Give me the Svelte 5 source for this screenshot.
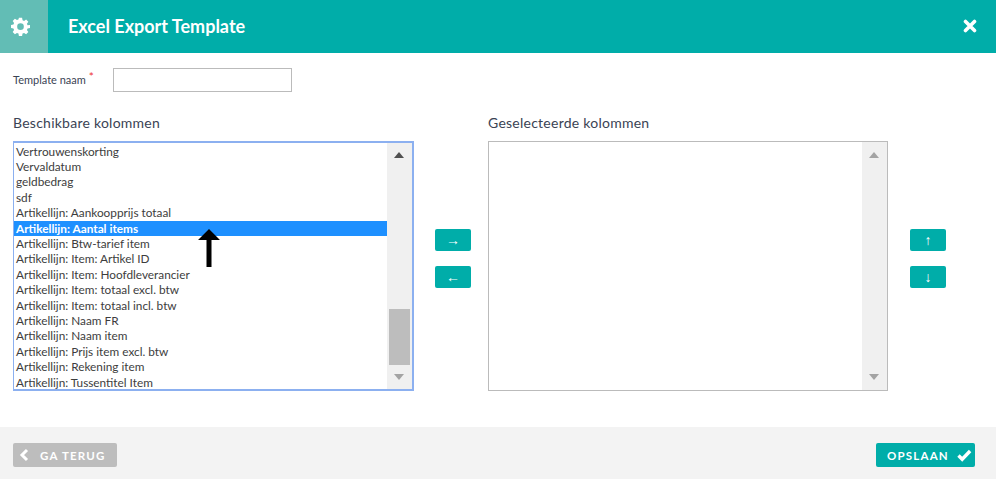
<script>
  const items = ['Vertrouwenskorting','Vervaldatum','geldbedrag','sdf','Artikellijn: Aankoopprijs totaal','Artikellijn: Aantal items','Artikellijn: Btw-tarief item','Artikellijn: Item: Artikel ID','Artikellijn: Item: Hoofdleverancier','Artikellijn: Item: totaal excl. btw','Artikellijn: Item: totaal incl. btw','Artikellijn: Naam FR','Artikellijn: Naam item','Artikellijn: Prijs item excl. btw','Artikellijn: Rekening item','Artikellijn: Tussentitel Item'];
</script>

<div class="page">
  <header class="head">
    <div class="gear">
      <svg width="20" height="20" viewBox="0 0 24 24"><path fill="#fff" fill-rule="evenodd" d="M10 1h4l.6 3.1 1.9.8 2.6-1.8 2.8 2.8-1.8 2.6.8 1.9L24 10v4l-3.1.6-.8 1.9 1.8 2.6-2.8 2.8-2.6-1.8-1.9.8L14 24h-4l-.6-3.1-1.9-.8-2.6 1.8-2.8-2.8 1.8-2.6-.8-1.9L0 14v-4l3.1-.6.8-1.9-1.8-2.6 2.8-2.8 2.6 1.8 1.9-.8zM12 8a4.2 4.2 0 1 0 0 8.400a4.200 4.200 0 0 0 0-8.400z"/></svg>
    </div>
    <h1>Excel Export Template</h1>
    <svg class="close" width="14" height="14" viewBox="0 0 14 14"><path d="M2.500 2.500l9 9m0-9l-9 9" stroke="#fff" stroke-width="3.600" stroke-linecap="round"/></svg>
  </header>

  <main class="body">
    <div class="name-row">
      <label for="tn">Template naam <span class="req">*</span></label>
      <input id="tn" type="text" />
    </div>

    <div class="columns">
      <section class="col">
        <h2>Beschikbare kolommen</h2>
        <div class="list focus">
          <div class="rows">
            {#each items as it, i}
              <div class="row" class:sel={i === 5}>{it}</div>
            {/each}
          </div>
          <div class="bar">
            <span class="tri up dark"></span>
            <span class="thumb"></span>
            <span class="tri down"></span>
          </div>
          <svg class="pointer" width="22" height="38" viewBox="0 0 22 38"><path d="M11 0L22 11H13.500V38H8.500V11H0z" fill="#000"/></svg>
        </div>
      </section>

      <div class="moves mid">
        <button>→</button>
        <button>←</button>
      </div>

      <section class="col">
        <h2>Geselecteerde kolommen</h2>
        <div class="list">
          <div class="rows"></div>
          <div class="bar">
            <span class="tri up"></span>
            <span class="tri down"></span>
          </div>
        </div>
      </section>

      <div class="moves right">
        <button>↑</button>
        <button>↓</button>
      </div>
    </div>
  </main>

  <footer class="foot">
    <button class="back">
      <svg width="10" height="14" viewBox="0 0 10 14"><path d="M8 2L3 7l5 5" fill="none" stroke="#fff" stroke-width="3"/></svg>
      GA TERUG
    </button>
    <button class="save">
      OPSLAAN
      <svg width="15" height="13" viewBox="0 0 15 13"><path d="M1.500 6.500l3.700 3.700 7.900-8.200" fill="none" stroke="#fff" stroke-width="3.400"/></svg>
    </button>
  </footer>
</div>

<style>
  :global(body) { margin: 0; background: #fff; }
  .page { width: 996px; height: 479px; display: flex; flex-direction: column; font-family: Lato, "Open Sans", sans-serif; color: #3a4354; overflow: hidden; }
  .head { height: 53px; box-sizing: border-box; background: #00ada9; display: flex; align-items: center; color: #fff; flex: none; }
  .gear { width: 48px; height: 53px; background: #62bdb5; flex: none; display: flex; align-items: center; justify-content: center; padding: 0 8px 1px 0; box-sizing: border-box; }
  .gear svg { width: 19px; height: 19px; }
  h1 { margin: -2px 0 0 20px; font-size: 18px; font-weight: 700; flex: 1; }
  .close { margin: -2px 19px 0 0; }
  .body { flex: 1; padding: 15px 0 0 13px; }
  .name-row { display: flex; align-items: center; height: 24px; }
  label { width: 100px; font-size: 11px; margin-top: -2px; }
  .req { color: #e33; font-size: 12px; position: relative; top: -3px; }
  input { width: 179px; height: 24px; box-sizing: border-box; border: 1px solid #bbb; padding: 0 4px; background: #fff; outline: none; }
  .columns { display: flex; margin-top: 22px; }
  .col { width: 401px; }
  .col:nth-of-type(2) { width: 400px; }
  h2 { margin: 0 0 10px; font-size: 14px; font-weight: 400; line-height: 17px; letter-spacing: .25px; }
  .list { position: relative; height: 250px; box-sizing: border-box; border: 1px solid #bbb; display: flex; }
  .list.focus { border: 2px solid #8cb0f0; border-left-width: 1px; }
  .rows { flex: 1; padding-top: .700px; overflow: hidden; }
  .row { height: 15.400px; line-height: 15.400px; padding-left: 2px; font-size: 11.800px; color: #3d3d3d; white-space: nowrap; }
  .row.sel { background: #1e90ff; color: #fff; font-weight: 700; }
  .bar { width: 25px; background: #f0f0f0; position: relative; flex: none; }
  .tri { position: absolute; left: 7px; width: 0; height: 0; border-left: 5.500px solid transparent; border-right: 5.500px solid transparent; }
  .tri.up { top: 10px; border-bottom: 6px solid #a3a3a3; }
  .tri.up.dark { top: 9px; border-bottom-color: #505050; }
  .tri.down { bottom: 10px; border-top: 6px solid #a3a3a3; }
  .focus .tri.down { bottom: 9px; }
  .thumb { position: absolute; left: 2px; width: 21px; top: 166px; height: 56px; background: #bdbdbd; }
  .pointer { position: absolute; left: 184px; top: 86px; }
  .moves { width: 36px; display: flex; flex-direction: column; gap: 15px; padding-top: 115px; flex: none; }
  .mid { margin: 0 17px 0 21px; }
  .right { margin-left: 22px; }
  .moves button { width: 36px; height: 22px; border: 0; border-radius: 2px; background: #00ada9; color: #fff; padding: 0; font: 700 14px "Liberation Sans", sans-serif; }
  .foot { height: 52px; background: #f3f3f3; flex: none; display: flex; justify-content: space-between; align-items: flex-start; padding: 16px 21px 0 13px; box-sizing: border-box; }
  .foot button { height: 24px; border: 0; border-radius: 2px; color: #fff; font: 700 11.500px Lato, sans-serif; letter-spacing: 1.200px; display: flex; align-items: center; padding: 0; }
  .back { width: 104px; background: #bdbdbd; gap: 11px; padding-left: 6px !important; }
  .save { width: 99px; background: #00ada9; gap: 8px; padding-left: 11px !important; }
</style>
